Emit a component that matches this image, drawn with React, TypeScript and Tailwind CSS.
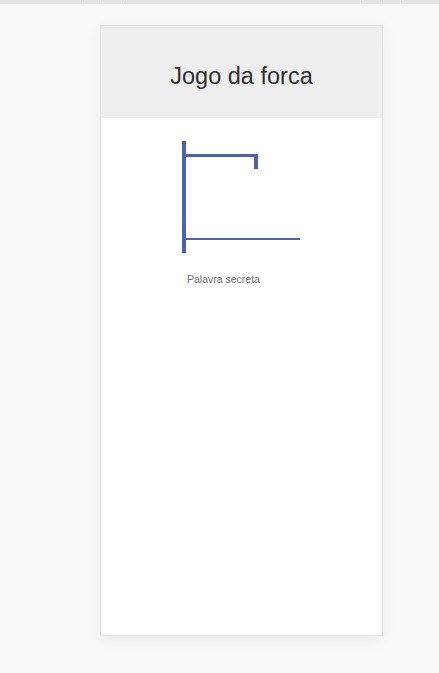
const ticks = [82, 102, 123, 360, 381, 400];

const Gallows = () => (
  <svg width="122" height="116" viewBox="0 0 122 116" className="block">
    <rect x="2" y="1" width="4" height="112" fill="#4d63ae" />
    <rect x="6" y="14" width="72" height="3" fill="#4d63ae" />
    <rect x="74" y="14" width="4" height="15" fill="#4d63ae" />
    <rect x="6" y="98" width="114" height="2" fill="#4d63ae" />
  </svg>
);

const App = () => {
  return (
    <div className="relative min-h-[673px] w-full bg-[#f9f9f9] font-['Liberation_Sans',Arial,sans-serif]">
      {/* top strip */}
      <div className="relative h-[4px] w-full bg-[#e4e4e4]">
        {ticks.map((x) => (
          <span key={x} className="absolute top-0 h-[4px] w-px bg-white" style={{ left: x }} />
        ))}
      </div>

      <div className="pt-[21px] pl-[100px]">
        <div className="flex h-[611px] w-[283px] flex-col border border-[#e2e2e2] bg-white shadow-[0_4px_14px_rgba(0,0,0,0.06)]">
          <div className="flex h-[92px] items-center justify-center bg-[#eeeeee]">
            <h1 className="pt-[10px] text-[23.5px] text-[#2e2e2e]">Jogo da forca</h1>
          </div>
          <div className="flex flex-col">
            <div className="mt-[22px] ml-[79px]">
              <Gallows />
            </div>
            <p className="mt-[16px] ml-[86px] text-[10.5px] leading-[14px] text-[#6f6f6f]">Palavra secreta</p>
          </div>
        </div>
      </div>
    </div>
  );
};

export default App;
